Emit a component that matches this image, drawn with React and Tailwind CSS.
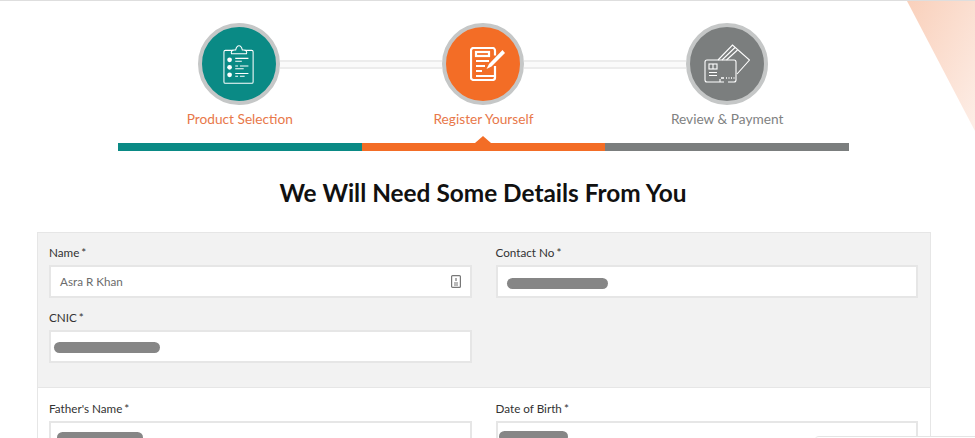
function ChecklistIcon() {
  return (
    <svg width="32" height="41" viewBox="0 0 34 42" fill="none" stroke="#fff" strokeWidth="1.100">
      <path d="M11 6H2.500A1.500 1.500 0 0 0 1 7.500v32A1.500 1.500 0 0 0 2.500 41h28a1.500 1.500 0 0 0 1.500-1.500v-32A1.500 1.500 0 0 0 30.500 6H23" />
      <path d="M9 9.500h16c.8-2-.5-4-3-4h-1.500C20 3 18.700 1 17 1s-3 2-3.500 4.500H12c-2.500 0-3.800 2-3 4z" />
      <circle cx="7" cy="16" r="2.500" fill="#fff" stroke="none" />
      <circle cx="7" cy="24" r="2.500" fill="#fff" stroke="none" />
      <circle cx="7" cy="32" r="2.500" fill="#fff" stroke="none" />
      <path d="M13 14.500h14M13 17.500h7M13 22.500h3M18 22.500h9M13 25.500h9M13 30.500h14M13 33.500h3M18 33.500h5" />
    </svg>
  );
}

function FormIcon() {
  return (
    <svg className="ml-[9px]" width="36" height="34" viewBox="0 0 36 34" fill="none" stroke="#fff" strokeWidth="2.200">
      <path d="M25 19v11.500a2.500 2.500 0 0 1-2.500 2.500h-19A2.500 2.500 0 0 1 1 30.500v-27A2.500 2.500 0 0 1 3.500 1h19A2.500 2.500 0 0 1 25 3.500v5" />
      <rect x="6" y="5" width="13" height="4" />
      <path d="M6 14h13M6 19h9M6 24h6M6 29h19" />
      <path d="M32.500 3 19 17l-2.500 5 5-2.500L35 6z" fill="#fff" stroke="none" />
    </svg>
  );
}

function CardsIcon() {
  return (
    <svg width="46" height="40" viewBox="0 0 46 40" fill="none" stroke="#fff" strokeWidth="1.100">
      <path d="M14 16 28.500 1 45.500 16 33 30" />
      <path d="M18 16 31 3.500M22.500 16 33.500 6" />
      <path d="M20 38H3a2 2 0 0 1-2-2V18a2 2 0 0 1 2-2h27a2 2 0 0 1 2 2v18a2 2 0 0 1-2 2h-6" />
      <rect x="5" y="20" width="8" height="5" />
      <path d="M9 20v5M5 28.500h8M5 31.500h8" />
      <path d="M17 34h3M22 34h1M24.500 34h1M27 34h1M29.500 34h1" strokeWidth="1.400" />
      <path d="M16 38v-3" />
    </svg>
  );
}

function StepCircle({ color, children }) {
  return (
    <div className={`flex h-[82px] w-[82px] shrink-0 items-center justify-center rounded-full border-[4px] border-[#c5c7c7] ${color}`}>
      {children}
    </div>
  );
}

function Connector() {
  return <div className="h-[9px] flex-1 border-y-2 border-[#ececec] bg-[#fafafa]" />;
}

function Field({ label, children, className = "" }) {
  return (
    <div className={className}>
      <label className="block h-[22px] text-[11.700px] leading-[18px] text-[#333]">
        {label}
        <span className="ml-[2px]">*</span>
      </label>
      <div className="relative flex h-[33px] items-center border-2 border-[#e6e6e6] bg-white">{children}</div>
    </div>
  );
}

function Blur({ className }) {
  return <div className={`h-[11px] rounded-full bg-[#868686] ${className}`} />;
}

export default function App() {
  return (
    <div className="relative h-[438px] w-[975px] overflow-hidden border-t border-[#dedede] bg-white font-['Lato','Open_Sans',sans-serif]">
      {/* corner decoration */}
      <div className="absolute right-0 top-0 h-[130px] w-[68px] bg-gradient-to-br from-[#f9d0bb] to-[#fdeee7] [clip-path:polygon(0_0,100%_0,100%_100%)]" />

      <div className="relative ml-[118px] w-[731px] pt-[22px]">
        <div className="flex items-center pl-[80px] pr-[81px]">
          <StepCircle color="bg-[#0a8a85]"><ChecklistIcon /></StepCircle>
          <Connector />
          <StepCircle color="bg-[#f36d26]"><FormIcon /></StepCircle>
          <Connector />
          <StepCircle color="bg-[#7b7e7e]"><CardsIcon /></StepCircle>
        </div>
        <div className="mt-[4px] grid grid-cols-3 text-center text-[13.700px] leading-[20px]">
          <span className="text-[#e8784a]">Product Selection</span>
          <span className="text-[#e8784a]">Register Yourself</span>
          <span className="text-[#7f8282]">Review &amp; Payment</span>
        </div>
        <div className="relative mt-[14px] grid h-[8px] grid-cols-3">
          <div className="bg-[#0a8a85]" />
          <div className="bg-[#f36d26]" />
          <div className="bg-[#7b7e7e]" />
          <div className="absolute left-[357px] top-[-7px] h-0 w-0 border-x-[8px] border-b-[7px] border-x-transparent border-b-[#f36d26]" />
        </div>
      </div>

      <h1 className="ml-[-9px] mt-[26px] text-center text-[24.400px] font-bold leading-[32px] text-[#111]">
        We Will Need Some Details From You
      </h1>

      <div className="ml-[37px] mt-[23px] w-[894px] border border-[#e6e6e6]">
        <div className="bg-[#f2f2f2] pb-[24px] pl-[11px] pr-[12px] pt-[10px]">
          <div className="grid grid-cols-2 gap-x-[24px]">
            <Field label="Name">
              <span className="pl-[9px] text-[11.700px] text-[#6b6b6b]">Asra R Khan</span>
              <svg className="absolute right-[9px]" width="10" height="13" viewBox="0 0 10 13" fill="none" stroke="#777" strokeWidth="1.200">
                <rect x="0.600" y="0.600" width="8.800" height="11.800" rx="1" />
                <path d="M5 3v3M3 8h4M3 10h4" />
              </svg>
            </Field>
            <Field label="Contact No">
              <Blur className="ml-[9px] mt-[3px] w-[101px]" />
            </Field>
            <Field label="CNIC" className="mt-[10px]">
              <Blur className="ml-[3px] mt-[2px] w-[106px]" />
            </Field>
          </div>
        </div>
        <div className="border-t border-[#e6e6e6] bg-white pb-[40px] pl-[11px] pr-[12px] pt-[11px]">
          <div className="grid grid-cols-2 gap-x-[24px]">
            <Field label="Father's Name">
              <Blur className="ml-[6px] w-[86px]" />
            </Field>
            <Field label="Date of Birth">
              <Blur className="ml-[1px] mt-[-2px] w-[69px]" />
            </Field>
          </div>
        </div>
      </div>

      {/* edge of a floating panel cut off by the bottom of the shot */}
      <div className="absolute left-[815px] top-[435px] h-[10px] w-[160px] rounded-tl-sm border-t border-[#e4e4e4] bg-white" />
    </div>
  );
}
